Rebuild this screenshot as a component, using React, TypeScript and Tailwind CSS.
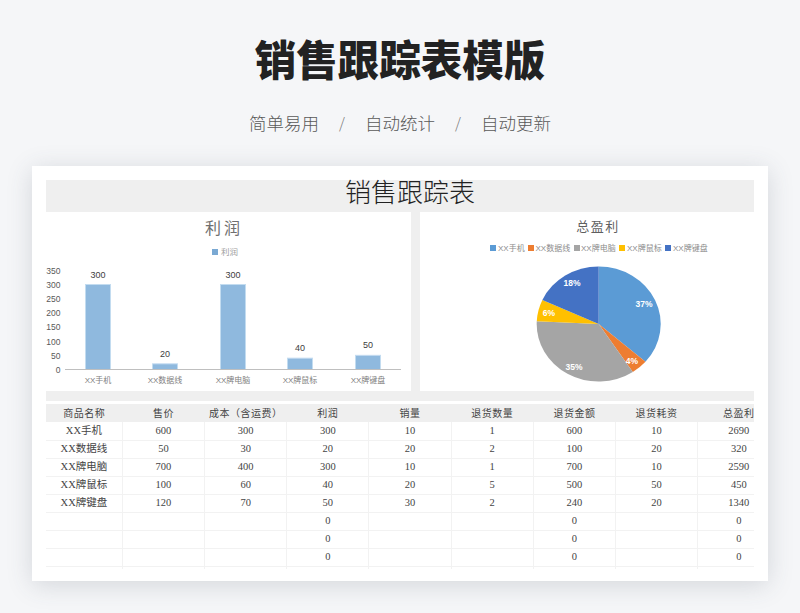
import React from "react";

const bars = [
  { name: "XX手机", value: 300, x: 39 },
  { name: "XX数据线", value: 20, x: 106 },
  { name: "XX牌电脑", value: 300, x: 174 },
  { name: "XX牌鼠标", value: 40, x: 241 },
  { name: "XX牌键盘", value: 50, x: 309 },
];

const slices = [
  { name: "XX手机", value: 2690, color: "#5b9bd5", sx: 70, tx: 78 },
  { name: "XX数据线", value: 320, color: "#ed7d31", sx: 108, tx: 115.5 },
  { name: "XX牌电脑", value: 2590, color: "#a5a5a5", sx: 154, tx: 161 },
  { name: "XX牌鼠标", value: 450, color: "#ffc000", sx: 199, tx: 207 },
  { name: "XX牌键盘", value: 1340, color: "#4472c4", sx: 245, tx: 253 },
];

const pieLabels = [
  { text: "37%", x: 224, y: 95 },
  { text: "4%", x: 212, y: 152 },
  { text: "35%", x: 154, y: 158 },
  { text: "6%", x: 129, y: 104 },
  { text: "18%", x: 152, y: 74 },
];

const headers = ["商品名称", "售价", "成本（含运费）", "利润", "销量", "退货数量", "退货金额", "退货耗资", "总盈利"];

const rows = [
  ["XX手机", "600", "300", "300", "10", "1", "600", "10", "2690"],
  ["XX数据线", "50", "30", "20", "20", "2", "100", "20", "320"],
  ["XX牌电脑", "700", "400", "300", "10", "1", "700", "10", "2590"],
  ["XX牌鼠标", "100", "60", "40", "20", "5", "500", "50", "450"],
  ["XX牌键盘", "120", "70", "50", "30", "2", "240", "20", "1340"],
  ["", "", "", "0", "", "", "0", "", "0"],
  ["", "", "", "0", "", "", "0", "", "0"],
  ["", "", "", "0", "", "", "0", "", "0"],
];

const BarChart = () => (
  <svg width="365" height="179" className="block font-['Liberation_Sans','Noto_Sans_CJK_SC',sans-serif]">
    <text x="178" y="22" textAnchor="middle" fontSize="16" letterSpacing="3" fill="#6f6f6f">
      利润
    </text>
    <rect x="166" y="37" width="6" height="6" fill="#7aa9d3" />
    <text x="175" y="43" fontSize="8.5" fill="#a0a0a0">
      利润
    </text>
    {[350, 300, 250, 200, 150, 100, 50, 0].map((t) => (
      <text key={t} x="14.5" y={161 - (t / 50) * 14.2} textAnchor="end" fontSize="8.5" fill="#595959">
        {t}
      </text>
    ))}
    {bars.map((b) => {
      const h = (b.value / 300) * 85;
      return (
        <g key={b.name}>
          <rect x={b.x + 0.5} y={157.5 - h} width="25" height={h} fill="#8fb9de" stroke="#c3dcf0" />
          <text x={b.x + 13} y={157.5 - h - 7} textAnchor="middle" fontSize="9" fill="#404040">
            {b.value}
          </text>
          <text x={b.x + 13} y="171" textAnchor="middle" fontSize="8" fill="#808080">
            {b.name}
          </text>
        </g>
      );
    })}
    <rect x="19" y="157" width="336" height="1" fill="#bfbfbf" />
  </svg>
);

const PieChart = () => {
  const cx = 178.7;
  const cy = 112;
  // the pie is slightly squashed in the picture
  const rx = 62;
  const ry = 57.5;
  const total = slices.reduce((s, d) => s + d.value, 0);
  let acc = 0;
  const point = (v: number) => {
    const a = (v / total) * Math.PI * 2;
    return `${cx + rx * Math.sin(a)} ${cy - ry * Math.cos(a)}`;
  };
  return (
    <svg width="334" height="179" className="block font-['Liberation_Sans','Noto_Sans_CJK_SC',sans-serif]">
      <text x="178" y="19" textAnchor="middle" fontSize="13" letterSpacing="1.5" fill="#5f5f5f">
        总盈利
      </text>
      {slices.map((s) => (
        <g key={s.name}>
          <rect x={s.sx} y="33" width="6" height="6" fill={s.color} />
          <text x={s.tx} y="39" fontSize="8" fill="#8c8c8c">
            {s.name}
          </text>
        </g>
      ))}
      {slices.map((s) => {
        const from = acc;
        acc += s.value;
        const large = s.value / total > 0.5 ? 1 : 0;
        return (
          <path
            key={s.name}
            d={`M${cx} ${cy} L${point(from)} A${rx} ${ry} 0 ${large} 1 ${point(acc)} Z`}
            fill={s.color}
          />
        );
      })}
      {pieLabels.map((l) => (
        <text key={l.text} x={l.x} y={l.y} textAnchor="middle" fontSize="8.5" fontWeight="700" fill="#ffffff">
          {l.text}
        </text>
      ))}
    </svg>
  );
};

export default function App() {
  return (
    <div className="flex h-[613px] w-[800px] flex-col items-center overflow-hidden bg-[#f5f6f8] font-['Noto_Sans_CJK_SC',sans-serif]">
      <h1 className="mt-[28px] h-[60px] text-[41.5px] leading-[60px] font-black text-[#222222]">销售跟踪表模版</h1>
      <div className="mt-[15px] flex h-[40px] items-center text-[17.5px] font-light text-[#595959]">
        <span>简单易用</span>
        <span className="w-[46px] text-center text-[15px] text-[#777777]">/</span>
        <span>自动统计</span>
        <span className="w-[46px] text-center text-[15px] text-[#777777]">/</span>
        <span>自动更新</span>
      </div>
      <div className="mt-[23px] h-[415px] w-[736px] bg-white px-[14px] pt-[14px] shadow-[0_4px_24px_rgba(60,70,90,0.18)]">
        <div className="h-[32px] bg-[#efefef] pl-[20px] text-center text-[26px] leading-[22px] font-light text-[#222222]">
          销售跟踪表
        </div>
        <div className="flex gap-[9px] bg-[#efefef] pb-[10px]">
          <div className="w-[365px] bg-white">
            <BarChart />
          </div>
          <div className="flex-1 bg-white">
            <PieChart />
          </div>
        </div>
        <div className="mt-[3px] w-[708px] overflow-hidden">
          <table className="w-[734px] table-fixed border-collapse font-['Liberation_Serif','Noto_Sans_CJK_SC',serif] text-[10.5px] text-[#444444]">
            <colgroup>
              <col className="w-[76.4px]" />
              {headers.slice(1).map((h) => (
                <col key={h} className="w-[82.2px]" />
              ))}
            </colgroup>
            <thead>
              <tr className="h-[18px] bg-[#efefef]">
                {headers.map((h) => (
                  <th key={h} className="p-0 text-center text-[10px] font-normal tracking-[0.5px] whitespace-nowrap">
                    {h}
                  </th>
                ))}
              </tr>
            </thead>
            <tbody>
              {rows.map((row, i) => (
                <tr key={i} className="h-[18px] border-b border-[#f2f2f2]">
                  {row.map((c, j) => (
                    <td key={j} className="border-r border-[#f2f2f2] p-0 pt-px text-center leading-none">
                      {c}
                    </td>
                  ))}
                </tr>
              ))}
              <tr className="h-[3px]">
                {headers.map((h) => (
                  <td key={h} className="border-r border-[#f2f2f2] p-0" />
                ))}
              </tr>
            </tbody>
          </table>
        </div>
      </div>
    </div>
  );
}
